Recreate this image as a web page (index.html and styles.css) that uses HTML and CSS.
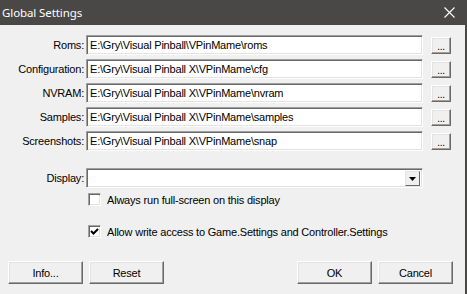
FILE: index.html
```html
<!DOCTYPE html>
<html lang="en">
<head>
    <meta charset="UTF-8">
    <title>Global Settings</title>
    <link rel="stylesheet" href="styles.css">
</head>
<body>

<div class="window">
    <div class="titlebar">
        <span class="title">Global Settings</span>
        <svg class="close" width="11" height="11" viewBox="0 0 11 11">
            <path d="M0.5 0.5 L10.5 10.5 M10.5 0.5 L0.5 10.5" stroke="#fff" stroke-width="1.1"/>
        </svg>
    </div>

    <div class="content">
        <!-- Paths -->
        <div class="paths">
            <div class="row">
                <label class="label">Roms:</label>
                <div class="edit">E:\Gry\Visual Pinball\VPinMame\roms</div>
                <button class="btn browse">...</button>
            </div>
            <div class="row">
                <label class="label">Configuration:</label>
                <div class="edit">E:\Gry\Visual Pinball X\VPinMame\cfg</div>
                <button class="btn browse">...</button>
            </div>
            <div class="row">
                <label class="label">NVRAM:</label>
                <div class="edit">E:\Gry\Visual Pinball X\VPinMame\nvram</div>
                <button class="btn browse">...</button>
            </div>
            <div class="row">
                <label class="label">Samples:</label>
                <div class="edit">E:\Gry\Visual Pinball X\VPinMame\samples</div>
                <button class="btn browse">...</button>
            </div>
            <div class="row">
                <label class="label">Screenshots:</label>
                <div class="edit">E:\Gry\Visual Pinball X\VPinMame\snap</div>
                <button class="btn browse">...</button>
            </div>
        </div>

        <!-- Display -->
        <div class="row display-row">
            <label class="label">Display:</label>
            <div class="edit combo">
                <span class="combo-btn">
                    <svg width="7" height="4" viewBox="0 0 7 4"><path d="M0 0 H7 L3.5 4 Z" fill="#000"/></svg>
                </span>
            </div>
        </div>

        <div class="check first">
            <span class="box"></span>
            <span>Always run full-screen on this display</span>
        </div>
        <div class="check second">
            <span class="box">
                <svg width="9" height="9" viewBox="0 0 9 9"><path d="M1 4 L3.5 6.5 L8 2" stroke="#000" stroke-width="2" fill="none"/></svg>
            </span>
            <span>Allow write access to Game.Settings and Controller.Settings</span>
        </div>

        <!-- Buttons -->
        <div class="footer">
            <div class="group">
                <button class="btn action">Info...</button>
                <button class="btn action">Reset</button>
            </div>
            <div class="group">
                <button class="btn action">OK</button>
                <button class="btn action">Cancel</button>
            </div>
        </div>
    </div>
</div>

</body>
</html>
```

FILE: styles.css
```css
body {
    margin: 0;
    padding: 0;
    font-family: "Liberation Sans", Arial, sans-serif;
    font-size: 11px;
    letter-spacing: -0.2px;
    color: #000;
}
.window {
    width: 467px;
    height: 294px;
    box-sizing: border-box;
    background-color: #f0f0f0;
    border-right: 2px solid #4a4846;
    overflow: hidden;
}
.titlebar {
    height: 25px;
    background-color: #4a4846;
    display: flex;
    align-items: center;
    justify-content: space-between;
    padding: 0 10px 0 2px;
}
.title {
    font-family: "Noto Sans", sans-serif;
    font-size: 11.5px;
    letter-spacing: -0.1px;
    color: #fff;
}
.content {
    padding-top: 10px;
}
.paths {
    display: flex;
    flex-direction: column;
    gap: 4px;
}
.row {
    display: flex;
    align-items: center;
    height: 20px;
}
.label {
    width: 86px;
    text-align: right;
    padding-right: 2px;
    box-sizing: border-box;
}
.edit {
    width: 337px;
    height: 20px;
    box-sizing: border-box;
    background-color: #fff;
    border-top: 1px solid #a0a0a0;
    border-left: 1px solid #a0a0a0;
    border-right: 1px solid #fff;
    border-bottom: 1px solid #fff;
    box-shadow: inset 1px 1px 0 #696969, inset -1px -1px 0 #e3e3e3;
    padding: 3px 0 0 3px;
    white-space: nowrap;
    line-height: 13px;
}
.btn {
    font-family: "Liberation Sans", Arial, sans-serif;
    font-size: 11px;
    letter-spacing: -0.2px;
    color: #000;
    background-color: #f0f0f0;
    border-top: 1px solid #fff;
    border-left: 1px solid #fff;
    border-right: 1px solid #696969;
    border-bottom: 1px solid #696969;
    box-shadow: inset -1px -1px 0 #a0a0a0, inset 1px 1px 0 #e3e3e3;
    padding: 0;
    margin: 0;
    box-sizing: border-box;
}
.browse {
    width: 20px;
    height: 17px;
    margin-left: 8px;
    margin-top: 2px;
    align-self: flex-start;
    line-height: 14px;
    padding-top: 2px;
    font-size: 10px;
}
.display-row {
    margin-top: 17px;
}
.combo {
    display: flex;
    justify-content: flex-end;
    padding: 2px 2px 0 0;
}
.combo-btn {
    width: 15px;
    height: 15px;
    box-sizing: border-box;
    background-color: #f0f0f0;
    border-top: 1px solid #e3e3e3;
    border-left: 1px solid #e3e3e3;
    border-right: 1px solid #696969;
    border-bottom: 1px solid #696969;
    display: flex;
    align-items: center;
    justify-content: center;
}
.check {
    display: flex;
    align-items: center;
    margin-left: 88px;
    gap: 6px;
}
.check.first {
    margin-top: 5px;
}
.check.second {
    margin-top: 19px;
}
.box {
    width: 13px;
    height: 13px;
    box-sizing: border-box;
    background-color: #fff;
    border-top: 1px solid #a0a0a0;
    border-left: 1px solid #a0a0a0;
    border-right: 1px solid #fff;
    border-bottom: 1px solid #fff;
    box-shadow: inset 1px 1px 0 #696969, inset -1px -1px 0 #e3e3e3;
    display: flex;
    align-items: center;
    justify-content: center;
}
.footer {
    display: flex;
    justify-content: space-between;
    margin-top: 23px;
    padding: 0 12px 0 8px;
}
.group {
    display: flex;
    gap: 6px;
}
.action {
    width: 75px;
    height: 23px;
}
```
